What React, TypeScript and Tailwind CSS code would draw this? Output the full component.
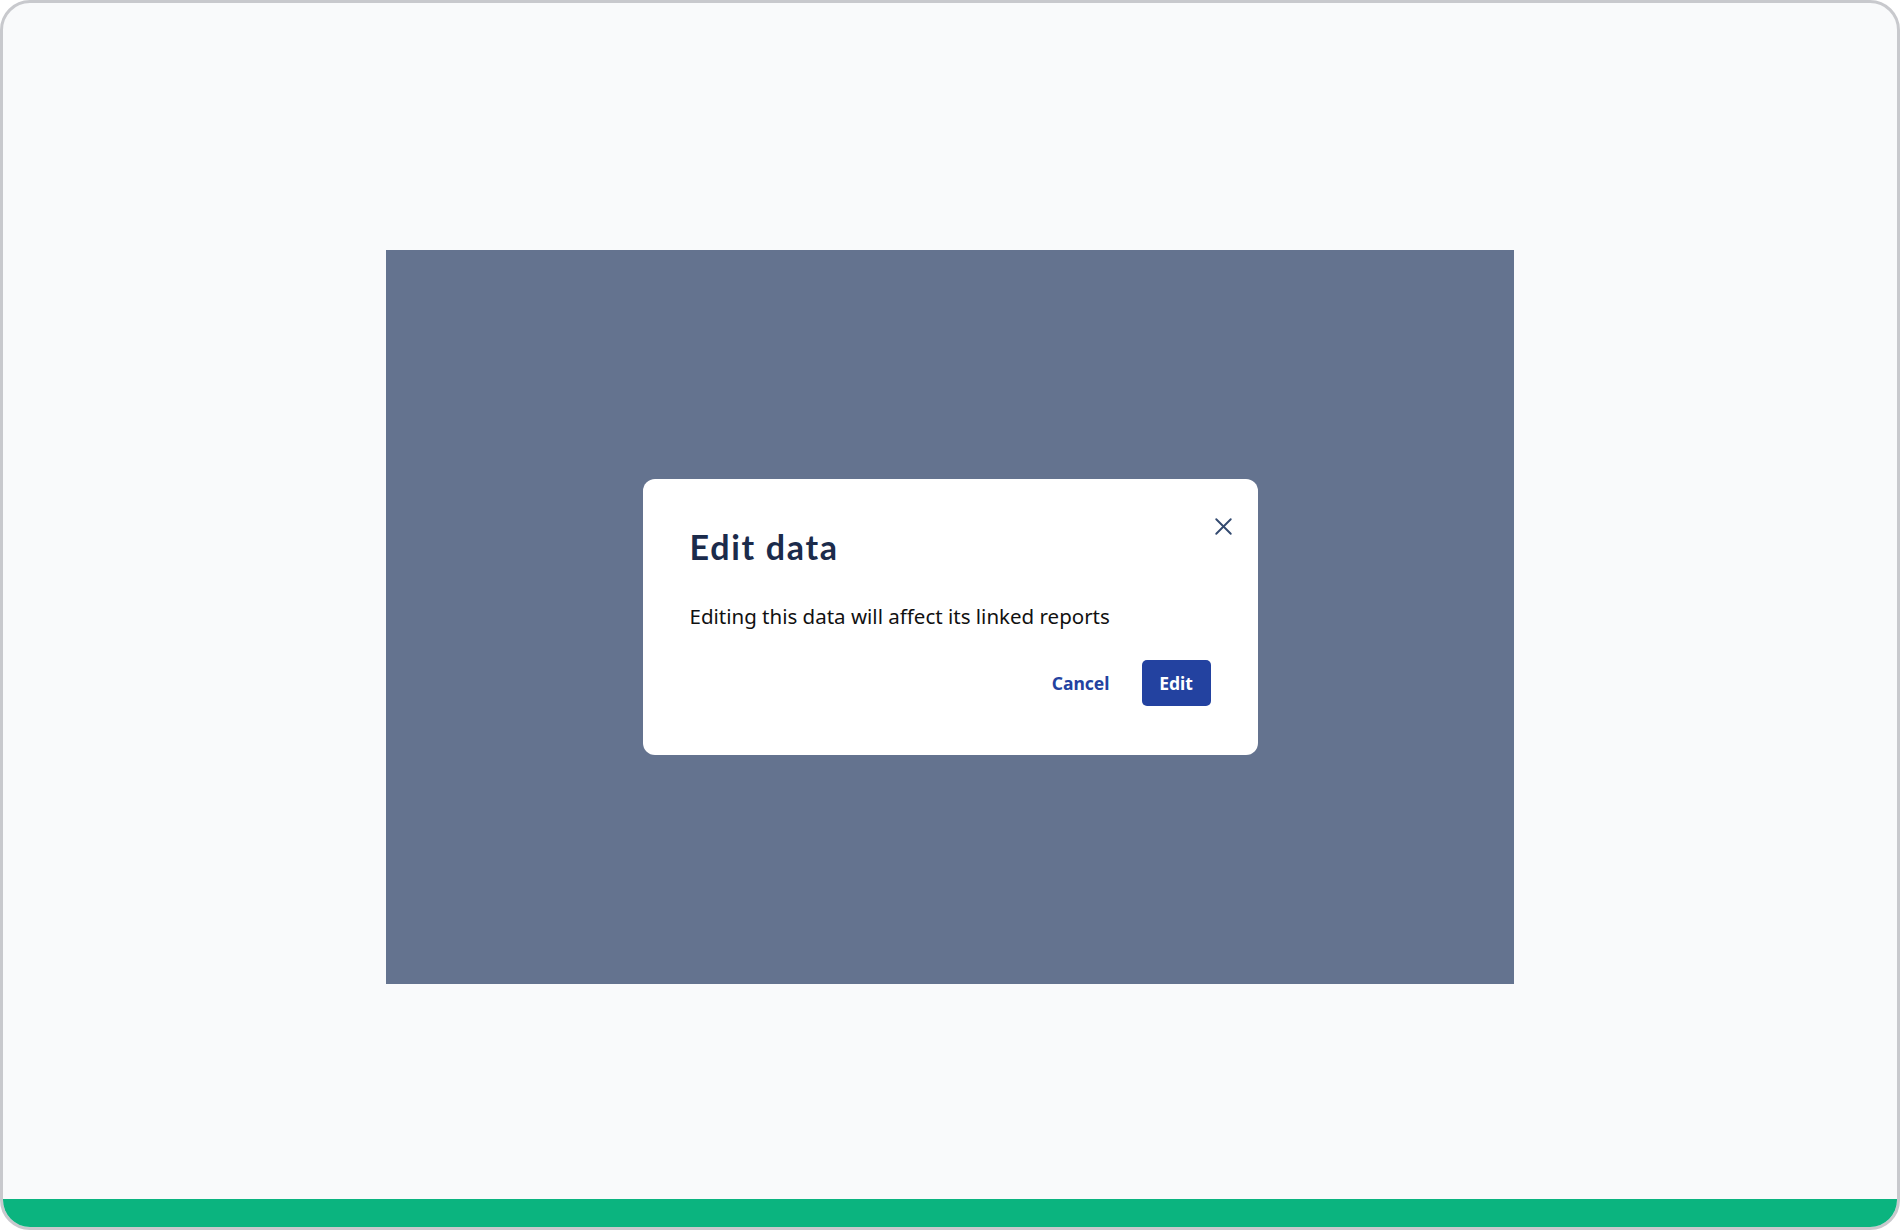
import { X } from "lucide-react";

const EditDataModal = () => {
  return (
    <div className="relative w-[615px] rounded-[12px] bg-white px-[47px] pt-[48px] pb-[49px]">
      <button
        type="button"
        aria-label="Close"
        className="absolute right-[20px] top-[33px] flex h-[29px] w-[29px] items-center justify-center text-[#334a70]"
      >
        <X size={29} strokeWidth={1.6} />
      </button>

      <h2 className="font-['Lato',sans-serif] text-[34px] leading-[40px] font-bold tracking-[0.05em] text-[#1b2b4b]">
        Edit data
      </h2>

      <p className="mt-[35px] font-['Noto_Sans',sans-serif] text-[20.5px] leading-[28px] text-[#111111]">
        Editing this data will affect its linked reports
      </p>

      <div className="mt-[30px] flex items-center justify-end gap-[32px] font-['Noto_Sans',sans-serif]">
        <button type="button" className="text-[17.5px] font-bold text-[#2342a0]">
          Cancel
        </button>
        <button
          type="button"
          className="h-[46px] w-[69px] rounded-[5px] bg-[#2342a0] text-[17.5px] font-bold text-white"
        >
          Edit
        </button>
      </div>
    </div>
  );
};

export default function App() {
  return (
    <div className="h-[1230px] w-[1900px] bg-white">
      <div className="flex h-full w-full flex-col overflow-hidden rounded-[30px] border-[3px] border-[#c8c9cd] bg-[#f9fafb]">
        <div className="flex-1 pl-[383px] pt-[247px]">
          <div className="flex h-[734px] w-[1128px] items-center justify-center bg-[#64738f]">
            <EditDataModal />
          </div>
        </div>
        <div className="h-[28px] bg-[#0bb47f]" />
      </div>
    </div>
  );
}
